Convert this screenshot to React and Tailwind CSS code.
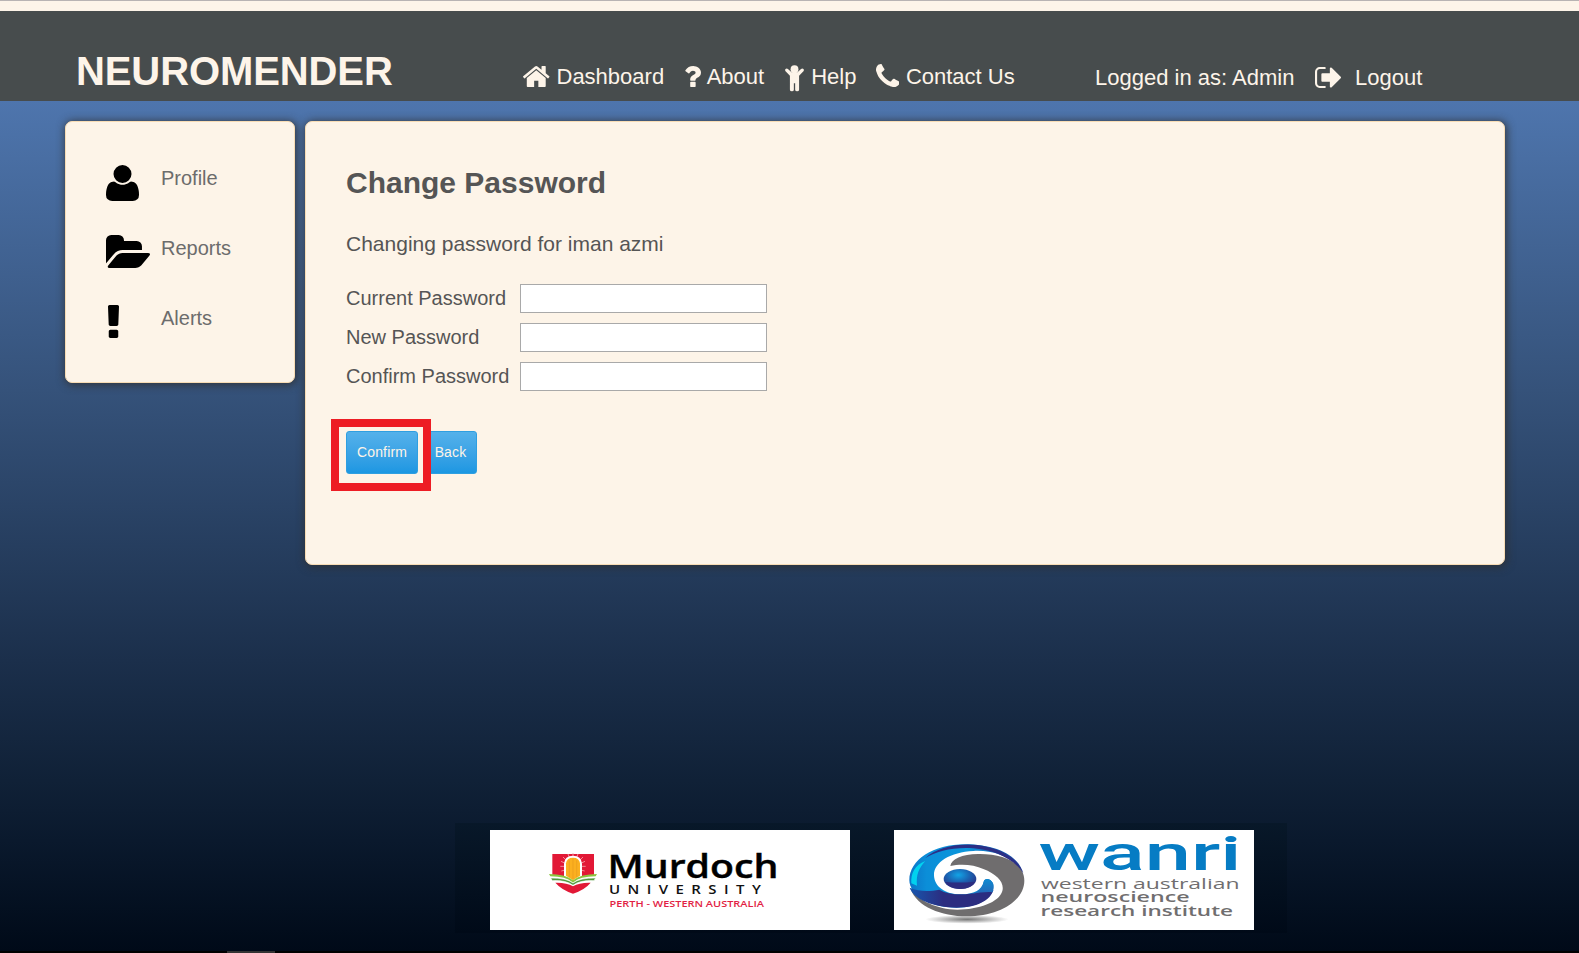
const HOME =
  'M1472 992v480q0 26-19 45t-45 19h-384v-384h-256v384h-384q-26 0-45-19t-19-45v-480q0-1 .5-3t.5-3l575-474 575 474q1 2 1 6zm223-69l-62 74q-8 9-21 11h-3q-13 0-21-7l-692-577-692 577q-12 8-24 7-13-2-21-11l-62-74q-8-10-7-23.5t11-21.5l719-599q32-26 76-26t76 26l244 204v-195q0-14 9-23t23-9h192q14 0 23 9t9 23v408l219 182q10 8 11 21.5t-7 23.5z';
const QUESTION =
  'M1088 1256v240q0 16-12 28t-28 12h-240q-16 0-28-12t-12-28v-240q0-16 12-28t28-12h240q16 0 28 12t12 28zm316-600q0 54-15.5 101t-35 76.5-55 59.5-57.5 43.5-61 35.5q-41 23-68.5 65t-27.5 67q0 17-12 32.5t-28 15.5h-240q-15 0-25.5-18.5t-10.5-37.5v-45q0-83 65-156.5t143-108.5q59-27 84-56t25-76q0-42-46.5-74t-107.5-32q-65 0-108 29-35 25-107 115-13 16-31 16-12 0-25-8l-164-125q-13-10-15.5-25t5.5-28q160-266 464-266 80 0 161 31t146 83 106 127.5 41 158.5z';
const PHONE =
  'M1600 1240q0 27-10 70.5t-21 68.5q-21 50-122 106-94 51-186 51-27 0-53-3.5t-57.5-12.5-47-14.5-55.5-20.5-49-18q-98-35-175-83-127-79-264-216t-216-264q-48-77-83-175-3-9-18-49t-20.5-55.5-14.5-47-12.5-57.5-3.5-53q0-92 51-186 56-101 106-122 25-11 68.5-21t70.5-10q14 0 21 3 18 6 53 76 11 19 30 54t35 63.5 31 53.5q3 4 17.5 25t21.5 35.5 7 28.5q0 20-28.5 50t-62 55-62 53-28.5 46q0 9 5 22.5t8.5 20.5 14 24 11.5 19q76 137 174 235t235 174q2 1 19 11.5t24 14 20.5 8.5 22.5 5q18 0 46-28.5t53-62 55-62 50-28.5q14 0 28.5 7t35.5 21.5 25 17.5q25 15 53.5 31t63.5 35 54 30q70 35 76 53 3 7 3 21z';
const SIGN_OUT =
  'M704 1440q0 4 1 20t.5 26.5-3 23.5-10 19.5-20.5 6.5h-320q-119 0-203.5-84.5t-84.5-203.5v-704q0-119 84.5-203.5t203.5-84.5h320q13 0 22.5 9.5t9.5 22.5q0 4 1 20t.5 26.5-3 23.5-10 19.5-20.5 6.5h-320q-66 0-113 47t-47 113v704q0 66 47 113t113 47h312l11.5 1 11.5 3 8 5.5 7 9 2 13.5zm928-544q0 26-19 45l-544 544q-19 19-45 19t-45-19-19-45v-288h-448q-26 0-45-19t-19-45v-384q0-26 19-45t45-19h448v-288q0-26 19-45t45-19 45 19l544 544q19 19 19 45z';
const USER =
  'M1600 1405q0 120-73 189.5t-194 69.5h-874q-121 0-194-69.5t-73-189.5q0-53 3.5-103.5t14-109 26.5-108.5 43-97.5 62-81 85.5-53.5 111.5-20q9 0 42 21.5t74.5 48 108 48 133.5 21.5 133.5-21.5 108-48 74.5-48 42-21.5q61 0 111.5 20t85.5 53.5 62 81 43 97.5 26.5 108.5 14 109 3.5 103.5zm-320-893q0 159-112.5 271.5t-271.5 112.5-271.5-112.5-112.5-271.5 112.5-271.5 271.5-112.5 271.5 112.5 112.5 271.5z';
const FOLDER =
  'M1815 952q0 31-31 66l-336 396q-43 51-120.5 86.5t-143.5 35.5h-1088q-34 0-60.5-13t-26.5-43q0-31 31-66l336-396q43-51 120.5-86.5t143.5-35.5h1088q34 0 60.5 13t26.5 43zm-343-344v160h-832q-94 0-197 47.5t-164 119.5l-337 396-5 6q0-4-.5-12.5t-.5-12.5v-960q0-92 66-158t158-66h320q92 0 158 66t66 158v32h544q92 0 158 66t66 158z';
const EXCLAMATION =
  'M1088 1248v224q0 26-19 45t-45 19h-256q-26 0-45-19t-19-45v-224q0-26 19-45t45-19h256q26 0 45 19t19 45zm30-1056l-28 768q-1 26-20.5 45t-45.5 19h-256q-26 0-45.5-19t-20.5-45l-28-768q-1-26 17.5-45t44.5-19h320q26 0 44.5 19t17.5 45z';

function Icon({ d, box, className }) {
  return (
    <svg viewBox={box} preserveAspectRatio="none" fill="currentColor" className={`block shrink-0 ${className}`}>
      <path d={d} />
    </svg>
  );
}

function ChildIcon() {
  return (
    <svg viewBox="0 0 58 80" fill="currentColor" className="block h-[26.5px] w-[19px]">
      <circle cx="29" cy="12.5" r="12" />
      <path d="M1.500 12Q5 8 9 11.500L20 22H38L49 11.500Q53 8 56.500 12Q59 16 55.500 19.500L43 32V75Q43 80 37 80Q31 80 31 75V55H27V75Q27 80 21 80Q15 80 15 75V32L2.500 19.500Q-1 16 1.500 12Z" />
    </svg>
  );
}

function NavItem({ slot, icon, children }) {
  return (
    <a className="flex items-start">
      <span className={slot}>{icon}</span>
      <span>{children}</span>
    </a>
  );
}

function Header() {
  return (
    <header className="flex h-[90px] items-start bg-[#474c4d] text-[22px] leading-6 whitespace-nowrap text-[#fdf4e9]">
      <h1 className="mt-10 ml-[76px] w-[447px] text-[40px] leading-10 font-bold tracking-[-0.1px]">NEUROMENDER</h1>
      <nav className="mt-[54px] flex w-[572px] gap-[20.5px]">
        <NavItem
          slot="w-[33.5px]"
          icon={<Icon d={HOME} box="89 250 1614 1286" className="mt-px h-[21px] w-[26.5px]" />}
        >
          Dashboard
        </NavItem>
        <NavItem
          slot="w-[22px]"
          icon={<Icon d={QUESTION} box="462 256 942 1280" className="mt-px h-[21px] w-[16px]" />}
        >
          About
        </NavItem>
        <NavItem slot="w-[26.5px]" icon={<ChildIcon />}>
          Help
        </NavItem>
        <NavItem
          slot="w-[29px]"
          icon={<Icon d={PHONE} box="192 128 1408 1408" className="-mt-px -ml-px h-[23px] w-[23.5px]" />}
        >
          Contact Us
        </NavItem>
      </nav>
      <div className="mt-[55px] flex">
        <span className="w-[220px]">Logged in as: Admin</span>
        <Icon d={SIGN_OUT} box="64 256 1568 1280" className="mt-px mr-[14px] h-[21px] w-[26px]" />
        <span>Logout</span>
      </div>
    </header>
  );
}

const card =
  'rounded-[7px] border border-[#f8dcb4] bg-[#fdf4e8] shadow-[1px_1px_8px_1px_rgba(48,48,48,0.85)]';

function SideItem({ icon, children }) {
  return (
    <a className="flex h-[70px] items-start">
      <span className="-mt-px flex w-[55px]">{icon}</span>
      <span className="leading-6">{children}</span>
    </a>
  );
}

function Sidebar() {
  return (
    <aside className={`h-[262px] w-[230px] pt-[44px] pl-10 text-[20px] text-[#6c6c6c] ${card}`}>
      <SideItem icon={<Icon d={USER} box="192 128 1408 1536" className="h-9 w-[33px] text-black" />}>
        Profile
      </SideItem>
      <SideItem icon={<Icon d={FOLDER} box="-64 128 1879 1408" className="h-[33px] w-11 text-black" />}>
        Reports
      </SideItem>
      <SideItem
        icon={<Icon d={EXCLAMATION} box="674 128 444 1408" className="ml-0.5 h-[33px] w-[11px] text-black" />}
      >
        Alerts
      </SideItem>
    </aside>
  );
}

function Field({ label }) {
  return (
    <label className="flex h-[29px] items-center">
      <span className="w-[174px] leading-[27px]">{label}</span>
      <input type="password" className="h-[29px] w-[247px] border border-[#a9a9a9] bg-white" />
    </label>
  );
}

const button =
  'h-[43px] rounded-[3px] border border-[#2f9fe0] bg-linear-to-b from-[#54b1ea] to-[#1c97e2] text-[14px] tracking-[0.15px] text-[#fdf4e8]';

function Main() {
  return (
    <main className={`h-[444px] w-[1200px] pt-[42px] pl-10 text-[20px] text-[#555555] ${card}`}>
      <h2 className="text-[30px] leading-[38px] font-bold">Change Password</h2>
      <p className="mt-[30px] text-[21px] leading-6">Changing password for iman azmi</p>
      <div className="mt-[28px] flex flex-col gap-[10px]">
        <Field label="Current Password" />
        <Field label="New Password" />
        <Field label="Confirm Password" />
      </div>
      <div className="relative mt-10 flex gap-[6px]">
        <button className={`w-[72px] ${button}`}>Confirm</button>
        <button className={`w-[53px] ${button}`}>Back</button>
        <div className="absolute -top-3 -left-[15px] h-[72px] w-[100px] border-8 border-[#ed1c24]" />
      </div>
    </main>
  );
}

function MurdochLogo() {
  return (
    <svg viewBox="0 0 360 100" className="h-[100px] w-[360px] bg-white" fontFamily="'Open Sans', 'Noto Sans', sans-serif">
      <g transform="translate(-20 -15) scale(.33333)">
        <path d="M247 117H372V180Q340 178 309 198Q278 178 247 180Z" fill="#e21836" />
        <path d="M256 203Q290 202 309 214Q328 202 362 203Q345 224 309 236Q274 224 256 203Z" fill="#e21836" />
        <g stroke="#f6a5a8" strokeWidth="2.500">
          <path d="M309 114V128M294 117L299 130M324 117L319 130M279 126L290 137M339 126L328 137M273 139L286 145M345 139L332 145M271 154H284M347 154H334M274 168L286 165M344 168L332 165" />
        </g>
        <path d="M282 184V146Q284 122 309 122Q334 122 336 146V184L309 198Z" fill="#fff" />
        <path d="M288 182V145Q290 128 309 128Q328 128 330 145V182L309 196Z" fill="#fbb01f" />
        <path d="M298 136V186M309 130V192M320 136V186" stroke="#e99a1c" strokeWidth="2" />
        <path d="M237 177Q285 177 309 196Q333 177 381 177L377 184Q330 184 309 203Q288 184 241 184Z" fill="#8cc63f" />
        <path d="M242 189Q288 188 309 204Q330 188 377 189L372 197Q330 195 309 211Q288 195 247 197Z" fill="#4f9a3c" stroke="#fff" strokeWidth="2" />
      </g>
      <text x="117.500" y="47.700" fontSize="33" fontWeight="600" textLength="171" lengthAdjust="spacingAndGlyphs" fill="#000" stroke="#000" strokeWidth=".4">
        Murdoch
      </text>
      <text
        transform="translate(119 63.500) scale(1.2 1)"
        fontSize="12.500"
        fontWeight="600"
        letterSpacing="6.200"
        fill="#111"
      >
        UNIVERSITY
      </text>
      <text x="119.500" y="77.300" fontSize="8.500" fontWeight="600" textLength="154.500" lengthAdjust="spacingAndGlyphs" fill="#e21f45">
        PERTH - WESTERN AUSTRALIA
      </text>
    </svg>
  );
}

function WanriLogo() {
  return (
    <svg viewBox="0 0 360 100" className="h-[100px] w-[360px] overflow-visible bg-white">
      <defs>
        <linearGradient id="ring" x1="0" y1="0" x2="1" y2="0">
          <stop offset="0" stopColor="#0c74c8" />
          <stop offset=".15" stopColor="#0b8ed8" />
          <stop offset=".5" stopColor="#0b97dc" />
          <stop offset="1" stopColor="#1d3f9a" />
        </linearGradient>
        <linearGradient id="bowl" x1="0" y1="0" x2="1" y2="0">
          <stop offset="0" stopColor="#1756ae" />
          <stop offset=".4" stopColor="#2b2d80" />
          <stop offset="1" stopColor="#2b2d80" />
        </linearGradient>
        <linearGradient id="tail" x1="0" y1="0" x2="0" y2="1">
          <stop offset="0" stopColor="#0f8bd2" />
          <stop offset="1" stopColor="#2467b6" />
        </linearGradient>
        <radialGradient id="pupil" cx=".45" cy=".3" r=".7">
          <stop offset="0" stopColor="#12a4e6" />
          <stop offset=".5" stopColor="#1a63b2" />
          <stop offset="1" stopColor="#2b2d80" />
        </radialGradient>
        <radialGradient id="ground">
          <stop offset="0" stopColor="#777" />
          <stop offset="1" stopColor="#fff" />
        </radialGradient>
      </defs>
      <g transform="translate(-24 -15) scale(.33333)">
        <ellipse cx="291" cy="313" rx="125" ry="13" fill="url(#ground)" />
        <path
          d="M122 222C140 275 215 304 290 304C390 304 463 256 463 197C463 145 405 116 325 117C275 118 244 132 241 153C270 146 312 148 340 162C382 178 404 203 397 228C388 262 325 284 262 284C200 283 148 257 122 222Z"
          fill="#6f6d6e"
        />
        <path
          d="M118 195C118 135 190 88 285 88C375 88 445 120 460 175C435 125 365 104 310 108C240 112 190 142 192 182C194 215 225 237 272 238C312 238 335 225 341 200C344 188 362 190 369 205C378 240 335 277 260 278C180 278 118 240 118 195Z"
          fill="url(#ring)"
        />
        <path
          d="M119 218C150 231 180 229 208 224C225 234 247 238 272 238C312 238 333 228 370 225C362 257 318 278 260 278C190 277 130 252 119 218Z"
          fill="url(#bowl)"
        />
        <path d="M300 237C325 233 338 218 341 200C344 188 362 190 369 205C372 214 371 224 368 232C350 230 330 233 300 237Z" fill="url(#tail)" />
        <path
          d="M165 130C205 92 285 80 350 95C405 107 445 135 460 175C430 128 365 104 310 100C250 96 200 108 165 130Z"
          fill="#2b2f86"
        />
        <path d="M124 205C122 175 134 150 166 138C146 160 138 180 141 212Z" fill="#00e0f5" opacity=".85" />
        <ellipse cx="270" cy="192" rx="49" ry="30" fill="url(#pupil)" />
        <path d="M226 201Q270 205 315 200Q305 222 270 222Q235 220 226 201Z" fill="#2b2d80" />
      </g>
      <text x="144.500" y="40" fontFamily="Roboto, sans-serif" fontSize="47.500" fontWeight="500" textLength="203" lengthAdjust="spacingAndGlyphs" fill="#067cc4">
        wanri
      </text>
      <g fontFamily="'Open Sans', 'Noto Sans', sans-serif" fontSize="14.200" fill="#706e6f">
        <text x="147" y="58.700" fontWeight="500" textLength="198.500" lengthAdjust="spacingAndGlyphs">
          western australian
        </text>
        <text x="146.500" y="72.300" fontWeight="600" textLength="149" lengthAdjust="spacingAndGlyphs">
          neuroscience
        </text>
        <text x="146.500" y="86" fontWeight="600" textLength="192.500" lengthAdjust="spacingAndGlyphs">
          research institute
        </text>
      </g>
    </svg>
  );
}

export default function App() {
  return (
    <div className="flex h-[953px] w-[1579px] flex-col overflow-hidden bg-black font-['Liberation_Sans',Arial,sans-serif]">
      <div className="h-[11px] border-t border-[#b8b3b3] bg-[#fdf4e9]" />
      <Header />
      <div className="flex h-[850px] flex-col justify-between bg-[linear-gradient(to_bottom,#4e75ad_0px,#35527a_290px,#1b2f4b_560px,#102137_680px,#0a192d_740px,#000a18_850px)]">
        <div className="flex items-start gap-[10px] pt-5 pl-[65px]">
          <Sidebar />
          <Main />
        </div>
        <footer className="mb-[18px] ml-[455px] flex h-[110px] w-[832px] items-start gap-11 bg-[linear-gradient(to_bottom,#081829,#000a18)] pt-[7px] pl-[35px]">
          <MurdochLogo />
          <WanriLogo />
        </footer>
      </div>
      <div className="ml-[227px] h-[2px] w-12 bg-[#333]" />
    </div>
  );
}
